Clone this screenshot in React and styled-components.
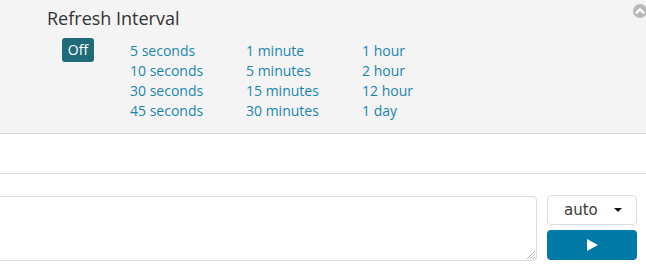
import React from 'react';
import styled, { createGlobalStyle } from 'styled-components';

const intervals = [
    ['5 seconds', '10 seconds', '30 seconds', '45 seconds'],
    ['1 minute', '5 minutes', '15 minutes', '30 minutes'],
    ['1 hour', '2 hour', '12 hour', '1 day'],
];

export default function App() {
    return (
        <>
            <GlobalStyle />
            <Panel>
                <CollapseIcon viewBox="0 0 14 14">
                    <circle cx="7" cy="7" r="7" fill="#b9b9b9" />
                    <path d="M3.6 8.6 L7 5.2 L10.4 8.6" fill="none" stroke="#fff" strokeWidth="2.2" strokeLinecap="round" strokeLinejoin="round" />
                </CollapseIcon>
                <Title>Refresh Interval</Title>
                <Options>
                    <OffButton>Off</OffButton>
                    <Columns>
                        {intervals.map((col, i) => (
                            <Column key={i}>
                                {col.map((label) => (
                                    <IntervalLink key={label}>{label}</IntervalLink>
                                ))}
                            </Column>
                        ))}
                    </Columns>
                </Options>
            </Panel>
            <Spacer />
            <QueryRow>
                <TextBox>
                    <Area />
                    <Grip viewBox="0 0 12 12">
                        <path d="M11 3 L3 11 M11 6 L6 11 M11 9 L9 11" stroke="#b5b5b5" strokeWidth="1" />
                    </Grip>
                </TextBox>
                <Side>
                    <Select>
                        <span>auto</span>
                        <Caret />
                    </Select>
                    <RunButton>
                        <svg width="11" height="12" viewBox="0 0 11 12">
                            <path d="M0 0 L11 6 L0 12 Z" fill="#fff" />
                        </svg>
                    </RunButton>
                </Side>
            </QueryRow>
        </>
    );
}

const GlobalStyle = createGlobalStyle`
    html, body {
        margin: 0;
        background: #fff;
        font-family: "Open Sans", "Liberation Sans", sans-serif;
        overflow: hidden;
    }
`;

const Panel = styled.div`
    position: relative;
    height: 134px;
    box-sizing: border-box;
    background: #f4f4f4;
    border-bottom: 1px solid #dcdcdc;
    padding: 6px 0 0 47px;
`;

const CollapseIcon = styled.svg`
    position: absolute;
    top: 4px;
    right: -1px;
    width: 14px;
    height: 14px;
`;

const Title = styled.div`
    font-size: 18px;
    line-height: 24px;
    color: #333;
`;

const Options = styled.div`
    display: flex;
    align-items: flex-start;
    margin-top: 8px;
    padding-left: 15px;
`;

const OffButton = styled.div`
    width: 32px;
    height: 24px;
    box-sizing: border-box;
    border-radius: 3px;
    background: #1f6b79;
    color: #fff;
    font-size: 14px;
    line-height: 24px;
    text-align: center;
`;

const Columns = styled.div`
    display: grid;
    grid-template-columns: repeat(3, 116px);
    margin-left: 36px;
    margin-top: 3px;
`;

const Column = styled.div`
    display: flex;
    flex-direction: column;
`;

const IntervalLink = styled.a`
    font-size: 14px;
    line-height: 20px;
    color: #1a85ad;
    cursor: pointer;
`;

const Spacer = styled.div`
    height: 39px;
    border-bottom: 1px solid #dcdcdc;
`;

const QueryRow = styled.div`
    display: flex;
    align-items: flex-start;
    gap: 10px;
    padding: 21px 9px 0 0;
`;

const TextBox = styled.div`
    position: relative;
    flex: 1;
    margin-left: -10px;
    margin-top: 1px;
`;

const Area = styled.textarea`
    display: block;
    width: 100%;
    height: 65px;
    box-sizing: border-box;
    border: 1px solid #dcdcdc;
    border-radius: 4px;
    resize: none;
    outline: none;
`;

const Grip = styled.svg`
    position: absolute;
    right: 1px;
    bottom: 1px;
    width: 12px;
    height: 12px;
`;

const Side = styled.div`
    display: flex;
    flex-direction: column;
    gap: 5px;
    width: 90px;
`;

const Select = styled.div`
    display: flex;
    align-items: center;
    justify-content: space-between;
    height: 30px;
    box-sizing: border-box;
    padding: 0 14px 0 16px;
    border: 1px solid #dcdcdc;
    border-radius: 4px;
    background: #fff;
    font-family: "DejaVu Sans", "Liberation Sans", sans-serif;
    font-size: 15px;
    color: #3a3a3a;
`;

const Caret = styled.span`
    width: 0;
    height: 0;
    border-left: 4px solid transparent;
    border-right: 4px solid transparent;
    border-top: 4px solid #111;
`;

const RunButton = styled.button`
    all: unset;
    display: flex;
    align-items: center;
    justify-content: center;
    height: 30px;
    border-radius: 4px;
    background: #0079a6;
    cursor: pointer;
`;
